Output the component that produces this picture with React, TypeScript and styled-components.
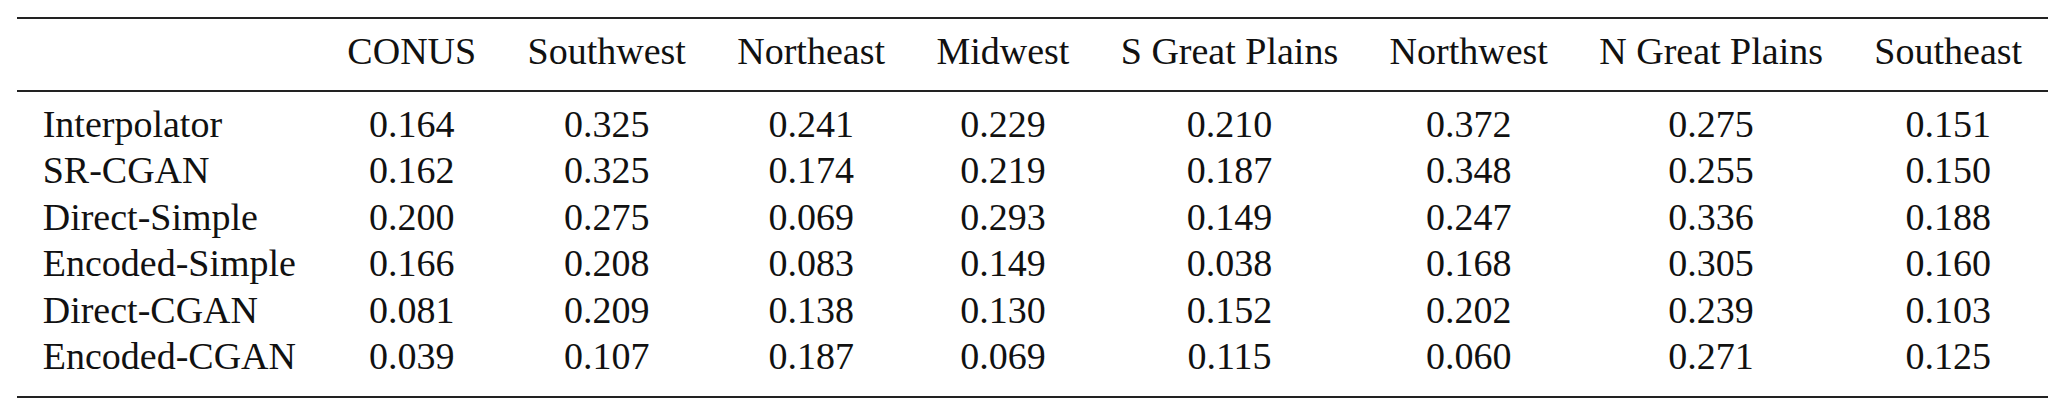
import React from "react";
import styled, { createGlobalStyle } from "styled-components";

const regions = [
  "CONUS",
  "Southwest",
  "Northeast",
  "Midwest",
  "S Great Plains",
  "Northwest",
  "N Great Plains",
  "Southeast",
];

const results: { model: string; values: string[] }[] = [
  { model: "Interpolator", values: ["0.164", "0.325", "0.241", "0.229", "0.210", "0.372", "0.275", "0.151"] },
  { model: "SR-CGAN", values: ["0.162", "0.325", "0.174", "0.219", "0.187", "0.348", "0.255", "0.150"] },
  { model: "Direct-Simple", values: ["0.200", "0.275", "0.069", "0.293", "0.149", "0.247", "0.336", "0.188"] },
  { model: "Encoded-Simple", values: ["0.166", "0.208", "0.083", "0.149", "0.038", "0.168", "0.305", "0.160"] },
  { model: "Direct-CGAN", values: ["0.081", "0.209", "0.138", "0.130", "0.152", "0.202", "0.239", "0.103"] },
  { model: "Encoded-CGAN", values: ["0.039", "0.107", "0.187", "0.069", "0.115", "0.060", "0.271", "0.125"] },
];

const GlobalStyle = createGlobalStyle`
  html, body {
    margin: 0;
    padding: 0;
    background: #ffffff;
  }
  body {
    font-family: "Liberation Serif", "Times New Roman", serif;
    color: #111111;
  }
`;

const Page = styled.div`
  padding: 17px 19px 0 17px;
`;

const Table = styled.table`
  border-collapse: collapse;
  font-size: 38px;
  line-height: 46.5px;
`;

const HeadRow = styled.tr`
  border-top: 2px solid #222222;
  border-bottom: 2px solid #222222;
`;

const HeadCell = styled.th`
  font-weight: 400;
  padding: 9px 25.7px 15px;
  text-align: center;
  white-space: nowrap;
`;

const BodyRow = styled.tr<{ $first?: boolean; $last?: boolean }>`
  border-bottom: ${(p) => (p.$last ? "2px solid #222222" : "none")};

  td {
    padding-top: ${(p) => (p.$first ? "9px" : "0")};
    padding-bottom: ${(p) => (p.$last ? "16px" : "0")};
  }
`;

const LabelCell = styled.td`
  padding-left: 25.7px;
  padding-right: 25.7px;
  text-align: left;
  white-space: nowrap;
`;

const ValueCell = styled.td`
  padding-left: 25.7px;
  padding-right: 25.7px;
  text-align: center;
  white-space: nowrap;
`;

const App = () => (
  <>
    <GlobalStyle />
    <Page>
      <Table>
        <thead>
          <HeadRow>
            <HeadCell />
            {regions.map((r) => (
              <HeadCell key={r}>{r}</HeadCell>
            ))}
          </HeadRow>
        </thead>
        <tbody>
          {results.map((row, i) => (
            <BodyRow key={row.model} $first={i === 0} $last={i === results.length - 1}>
              <LabelCell>{row.model}</LabelCell>
              {row.values.map((v, j) => (
                <ValueCell key={j}>{v}</ValueCell>
              ))}
            </BodyRow>
          ))}
        </tbody>
      </Table>
    </Page>
  </>
);

export default App;
